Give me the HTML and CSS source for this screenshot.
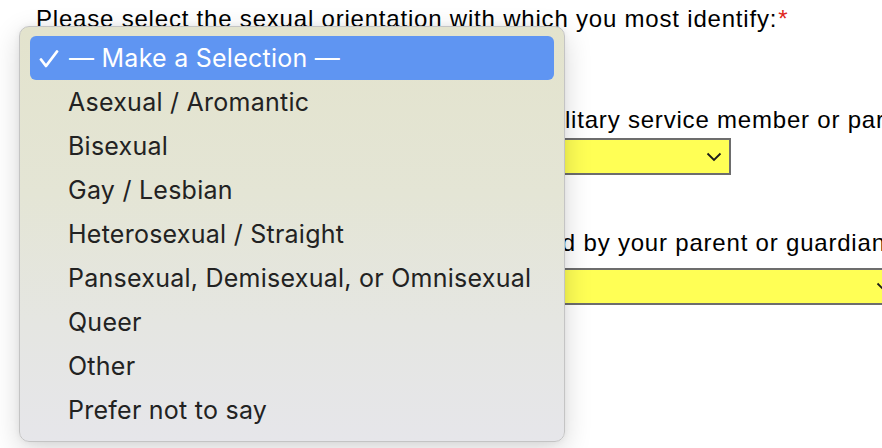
FILE: index.html
```html
<!DOCTYPE html>
<html lang="en">
<head>
<meta charset="utf-8">
<title>Form</title>
<link rel="stylesheet" href="styles.css">
</head>
<body>
<form class="form">
  <div class="field field-1">
    <label class="label">Please select the sexual orientation with which you most identify:<span class="req">*</span></label>
    <div class="select select-open"></div>
  </div>
  <div class="field field-2">
    <label class="label">Are you or your spouse, a current or former military service member or partner?</label>
    <div class="select select-short">
      <svg class="chev" width="16" height="10" viewBox="0 0 16 10"><polyline points="1.5,1.5 8,8 14.5,1.5" fill="none" stroke="#1a1a1a" stroke-width="1.8"/></svg>
    </div>
  </div>
  <div class="field field-3">
    <label class="label">Are all your tuition and living expenses covered by your parent or guardian?</label>
    <div class="select select-long">
      <svg class="chev" width="16" height="10" viewBox="0 0 16 10"><polyline points="1.5,1.5 8,8 14.5,1.5" fill="none" stroke="#1a1a1a" stroke-width="1.8"/></svg>
    </div>
  </div>
</form>

<div class="menu" role="listbox">
  <div class="item selected">
    <svg class="check" width="20" height="18" viewBox="0 0 20 18"><polyline points="2,9.5 7,16 18,1.5" fill="none" stroke="#ffffff" stroke-width="2.8" stroke-linecap="round" stroke-linejoin="round"/></svg>
    <span>— Make a Selection —</span>
  </div>
  <div class="item"><span>Asexual / Aromantic</span></div>
  <div class="item"><span>Bisexual</span></div>
  <div class="item"><span>Gay / Lesbian</span></div>
  <div class="item"><span>Heterosexual / Straight</span></div>
  <div class="item"><span>Pansexual, Demisexual, or Omnisexual</span></div>
  <div class="item"><span>Queer</span></div>
  <div class="item"><span>Other</span></div>
  <div class="item"><span>Prefer not to say</span></div>
</div>
</body>
</html>
```

FILE: styles.css
```css
html, body {
  margin: 0;
  padding: 0;
  background: #ffffff;
  overflow: hidden;
}
body {
  width: 882px;
  height: 448px;
  position: relative;
  font-family: "Liberation Sans", Arial, sans-serif;
  color: #000;
}
.form {
  padding: 6px 0 0 36px;
  display: flex;
  flex-direction: column;
}
.field {
  display: flex;
  flex-direction: column;
}
.label {
  font-size: 24px;
  line-height: 26px;
  letter-spacing: 0.8px;
  white-space: nowrap;
}
.req {
  color: #e0261b;
  margin-left: 1px;
}
.select {
  margin-top: 5px;
  height: 33px;
  background: #ffff55;
  border: 2px solid #6d6d6d;
  display: flex;
  align-items: center;
  justify-content: flex-end;
  box-sizing: content-box;
}
.select-open { width: 480px; }
.select-short { width: 691px; }
.select-long { width: 861px; }
.field-2 { margin-top: 33px; }
.field-3 { margin-top: 55px; }
.field-3 .select { margin-top: 12px; }
.chev {
  margin-right: 7px;
}

.menu {
  position: absolute;
  left: 19px;
  top: 26px;
  width: 524px;
  padding: 9px 10px 9px 10px;
  border: 1px solid #c4c4c4;
  border-radius: 10px;
  background: linear-gradient(180deg, #e3e3cd 0%, #e4e5d5 40%, #e5e6e2 72%, #e6e6ea 100%);
  box-shadow: 0 8px 28px rgba(0,0,0,0.16), 0 0 6px rgba(0,0,0,0.06);
  font-family: Inter, "Noto Sans", sans-serif;
  font-size: 25px;
  letter-spacing: 0.25px;
  color: #222222;
}
.item {
  height: 44px;
  display: flex;
  align-items: center;
  padding-left: 38px;
  position: relative;
  white-space: nowrap;
  border-radius: 6px;
}
.item.selected {
  background: #5f95f2;
  color: #ffffff;
  padding-left: 39px;
}
.check {
  position: absolute;
  left: 9px;
  top: 14px;
}
```
